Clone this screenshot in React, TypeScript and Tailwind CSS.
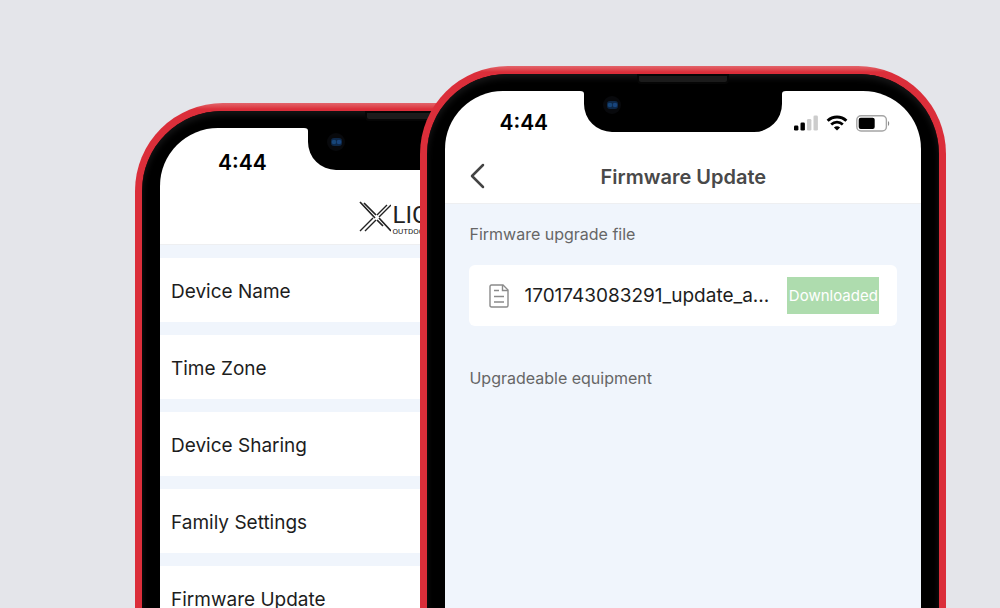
import React from "react";

const settings = [
  "Device Name",
  "Time Zone",
  "Device Sharing",
  "Family Settings",
  "Firmware Update",
];

function Notch({ className }: { className: string }) {
  return (
    <div
      className={`absolute -top-px left-1/2 -translate-x-1/2 rounded-b-[28px] bg-black ${className}`}
    >
      {/* small flares where the notch meets the bezel */}
      <svg className="absolute top-0 -left-1 w-1 h-1" viewBox="0 0 4 4">
        <path d="M0 0H4V4C4 2 3 1 0 1Z" fill="#000" />
      </svg>
      <svg className="absolute top-0 -right-1 w-1 h-1" viewBox="0 0 4 4">
        <path d="M4 0H0V4C0 2 1 1 4 1Z" fill="#000" />
      </svg>
      {/* camera */}
      <svg className="absolute top-1 left-4 w-6 h-6" viewBox="0 0 24 24">
        <circle cx="12" cy="11" r="9" fill="#08090c" />
        <rect x="7" y="7" width="11" height="8" rx="3" fill="#0d2747" />
        <circle cx="10" cy="11" r="2.3" fill="#174577" />
        <circle cx="15" cy="11" r="2.3" fill="#18447c" />
      </svg>
    </div>
  );
}

function Phone({
  className,
  notch,
  children,
}: {
  className: string;
  notch: string;
  children: React.ReactNode;
}) {
  return (
    <div
      className={`relative shrink-0 flex flex-col rounded-t-[88px] bg-[#d4252f] bg-linear-to-b from-[#e2646c] to-[#db2e3a] to-[6px] px-[7px] pt-2 ${className}`}
    >
      <div className="relative flex-1 flex flex-col rounded-t-[80px] bg-black px-[18px] pt-[17px] shadow-[inset_0_4px_6px_#161617]">
        {/* speaker */}
        <div className="absolute top-0 left-1/2 -translate-x-1/2 w-[92px] h-[10px] rounded-b-sm border-2 border-[#060606] bg-[#1b1b1b]"></div>
        <div className="relative flex-1 flex flex-col overflow-hidden rounded-t-[58px] bg-white">
          <Notch className={notch} />
          {children}
        </div>
      </div>
    </div>
  );
}

function StatusIcons() {
  return (
    <div className="flex items-center gap-2">
      <svg className="w-6 h-4" viewBox="0 0 24 16">
        <rect x="0" y="10.5" width="4.4" height="5" rx="1.3" fill="#000" />
        <rect x="6.5" y="7.5" width="4.4" height="8" rx="1.3" fill="#000" />
        <rect x="13" y="4" width="4.4" height="11.5" rx="1.3" fill="#ccc" />
        <rect x="19.5" y=".5" width="4.4" height="15" rx="1.3" fill="#ccc" />
      </svg>
      <svg className="w-[22px] h-4" viewBox="0 0 22 16" fill="none" stroke="#000">
        <path d="M1.6 5.8C7 .7 15 .7 20.4 5.8" strokeWidth="2.9" />
        <path d="M5.2 9.5C8.6 6.4 13.4 6.4 16.8 9.5" strokeWidth="2.8" />
        <path d="M11 15.6L7.9 12.4C9.7 10.9 12.3 10.9 14.1 12.4Z" fill="#000" stroke="none" />
      </svg>
      <svg className="w-[34px] h-[17px]" viewBox="0 0 34 17">
        <rect x=".8" y=".8" width="29.6" height="15.2" rx="4.2" fill="none" stroke="#a5a5a5" strokeWidth="1.4" />
        <rect x="2.7" y="2.7" width="16" height="11.4" rx="2" fill="#000" />
        <path d="M32 6V11C33.6 10.3 33.6 6.7 32 6Z" fill="#8a8a8a" />
      </svg>
    </div>
  );
}

function Logo() {
  return (
    <div className="flex w-[104px] gap-0.5 text-[#222]">
      <svg className="w-8 h-8 shrink-0" viewBox="0 0 32 32" fill="none" stroke="currentColor">
        <path d="M1 1L16 17M18 19L24 25M5 2L17 14M20 17L32 30" strokeWidth="1.7" />
        <path d="M32 4L20 16M28 4L18 14M14 17L1 30M17 19L6 30" strokeWidth="1.4" />
      </svg>
      <div className="flex flex-col gap-px pt-0.5">
        <span className="font-['Liberation_Sans_Narrow','Roboto',sans-serif] text-[24px] leading-6">LIG</span>
        <span className="font-['Roboto',sans-serif] text-[8px] leading-2">OUTDOOR</span>
      </div>
    </div>
  );
}

export default function App() {
  return (
    <main className="h-screen overflow-hidden flex bg-[#e4e5ea] pl-[13.5%] font-['Inter',sans-serif] text-[#1d1d1d]">
      {/* ===== SETTINGS SCREEN ===== */}
      <Phone className="mt-[103px] w-[63.7%]" notch="w-[206px] h-[43px]">
        <header className="shrink-0 h-[117px] border-b border-[#eeeff1]">
          <div className="pt-[21px] pl-[58px] text-[21px] leading-7 font-semibold text-black">
            4:44
          </div>
          <div className="flex justify-center pt-6">
            <Logo />
          </div>
        </header>
        <div className="flex-1 bg-[#f0f5fc] pt-[13px] space-y-[13px]">
          {settings.map((label) => (
            <button
              key={label}
              className="block w-full h-16 bg-white px-[11px] pt-1 text-left text-[19px] leading-7"
            >
              {label}
            </button>
          ))}
        </div>
      </Phone>

      {/* ===== FIRMWARE SCREEN ===== */}
      <Phone className="mt-[66px] -ml-[30.7%] w-[60.8%]" notch="w-[198px] h-[42px]">
        <header className="shrink-0 h-[113px] border-b border-[#eeeff1]">
          <div className="flex items-center justify-between pt-[18px] pl-[54px] pr-[31px]">
            <span className="text-[21px] leading-7 font-semibold text-black">4:44</span>
            <StatusIcons />
          </div>
          <div className="relative pt-[26px] text-center">
            <button aria-label="Back" className="absolute left-6 top-6">
              <svg className="w-[18px] h-7" viewBox="0 0 18 28" fill="none" stroke="#444" strokeWidth="2.5">
                <path d="M14 4L3 15L14 26" strokeLinecap="round" strokeLinejoin="round" />
              </svg>
            </button>
            <h1 className="text-[20px] leading-7 font-semibold text-[#494949]">
              Firmware Update
            </h1>
          </div>
        </header>

        <div className="flex-1 bg-[#f0f5fc] px-6 pt-[18px]">
          <h2 className="text-base leading-6 text-[#666]">Firmware upgrade file</h2>
          <div className="mt-[19px] flex h-[61px] items-center rounded-md bg-white pl-5 pr-[18px]">
            <svg className="w-5 h-6 shrink-0" viewBox="0 0 20 24" fill="none" stroke="#8a8a8a" strokeWidth="1.4">
              <path d="M2.5 1H14L19 6V21.5Q19 23 17.5 23H2.5Q1 23 1 21.5V2.5Q1 1 2.5 1Z" />
              <path d="M13.5 1V6.5H19M5 6.5H10M5 12.5H15M5 18H15" />
            </svg>
            <span className="ml-[15px] min-w-0 flex-1 whitespace-nowrap text-[19px] leading-7">
              1701743083291_update_a...
            </span>
            <button className="flex h-[37px] w-[92px] items-center justify-center bg-[#aedcae] text-[15px] leading-6 text-white">
              Downloaded
            </button>
          </div>
          <h2 className="mt-10 text-base leading-6 text-[#666]">Upgradeable equipment</h2>
        </div>
      </Phone>
    </main>
  );
}
